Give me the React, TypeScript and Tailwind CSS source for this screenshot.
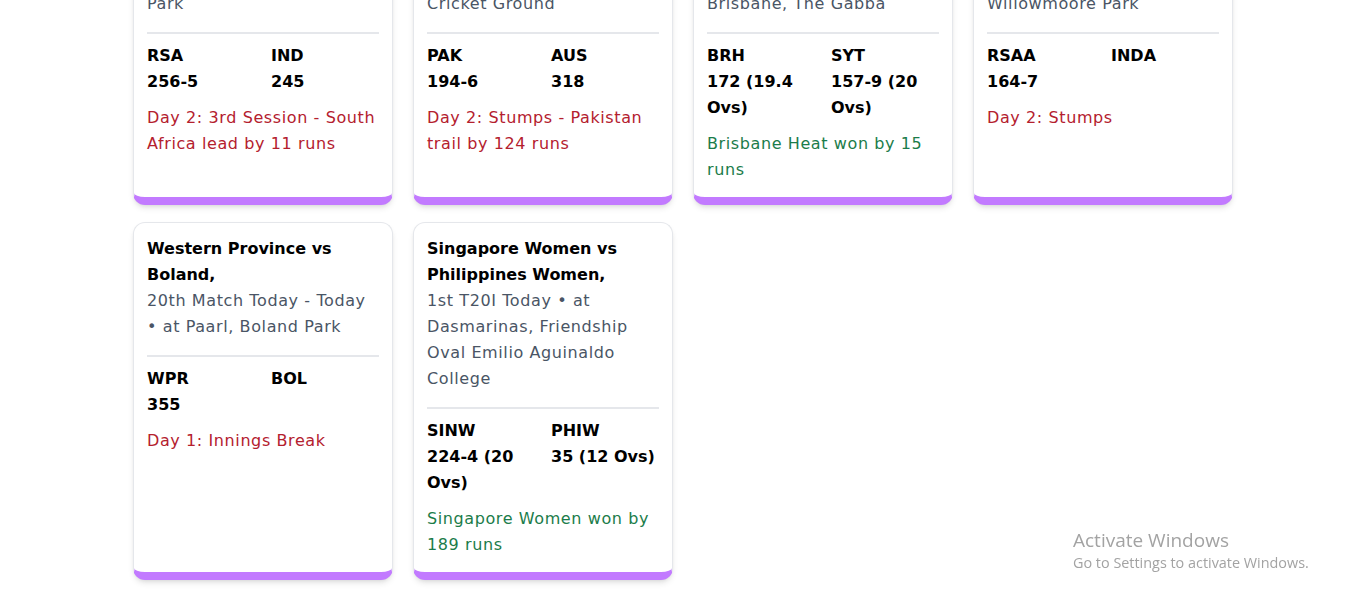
import React from "react";

type Match = {
  title: string;
  info: string;
  home: string;
  away: string;
  homeScore: string;
  awayScore: string;
  status: string;
  won?: boolean;
};

const matches: Match[] = [
  {
    title: "South Africa vs India,",
    info: "2nd Test Today - Today • at Centurion, SuperSport Park",
    home: "RSA",
    away: "IND",
    homeScore: "256-5",
    awayScore: "245",
    status: "Day 2: 3rd Session - South Africa lead by 11 runs",
  },
  {
    title: "Pakistan vs Australia,",
    info: "2nd Test Today • at Melbourne, Melbourne Cricket Ground",
    home: "PAK",
    away: "AUS",
    homeScore: "194-6",
    awayScore: "318",
    status: "Day 2: Stumps - Pakistan trail by 124 runs",
  },
  {
    title: "Brisbane Heat vs Sydney Thunder,",
    info: "11th Match Today • at Brisbane, The Gabba",
    home: "BRH",
    away: "SYT",
    homeScore: "172 (19.4 Ovs)",
    awayScore: "157-9 (20 Ovs)",
    status: "Brisbane Heat won by 15 runs",
    won: true,
  },
  {
    title: "SA A vs India A,",
    info: "Unofficial Test Today - Today • at Benoni, Willowmoore Park",
    home: "RSAA",
    away: "INDA",
    homeScore: "164-7",
    awayScore: "",
    status: "Day 2: Stumps",
  },
  {
    title: "Western Province vs Boland,",
    info: "20th Match Today - Today • at Paarl, Boland Park",
    home: "WPR",
    away: "BOL",
    homeScore: "355",
    awayScore: "",
    status: "Day 1: Innings Break",
  },
  {
    title: "Singapore Women vs Philippines Women,",
    info: "1st T20I Today • at Dasmarinas, Friendship Oval Emilio Aguinaldo College",
    home: "SINW",
    away: "PHIW",
    homeScore: "224-4 (20 Ovs)",
    awayScore: "35 (12 Ovs)",
    status: "Singapore Women won by 189 runs",
    won: true,
  },
];

const MatchCard: React.FC<{ match: Match }> = ({ match }) => {
  return (
    <article className="flex flex-col rounded-xl border border-gray-200 border-b-8 border-b-purple-400 bg-white px-[13px] pb-[14px] pt-[13px] shadow-md">
      <div className="border-b-2 border-gray-200 pb-[15px]">
        <h3 className="text-base font-bold leading-[26px] text-black">{match.title}</h3>
        <p className="text-base leading-[26px] tracking-[0.6px] text-gray-600">{match.info}</p>
      </div>
      <div className="mt-[9px] grid grid-cols-2 gap-4 text-base font-bold leading-[26px] text-black">
        <div>
          <p>{match.home}</p>
          <p>{match.homeScore}</p>
        </div>
        <div>
          <p>{match.away}</p>
          <p>{match.awayScore}</p>
        </div>
      </div>
      <p
        className={
          match.won
            ? "mt-2.5 text-base leading-[26px] tracking-[0.6px] text-[#1b7c4a]"
            : "mt-2.5 text-base leading-[26px] tracking-[0.6px] text-[#b4202e]"
        }
      >
        {match.status}
      </p>
    </article>
  );
};

export default function App() {
  return (
    <div className="min-h-screen overflow-hidden bg-white font-['DejaVu_Sans',sans-serif]">
      <div className="mx-auto mt-[-101px] grid w-[1100px] grid-cols-4 gap-x-5 gap-y-[17px]">
        {matches.map((m) => (
          <MatchCard key={m.home + m.away} match={m} />
        ))}
      </div>
      <div className="pointer-events-none fixed left-[1073px] top-[528px] font-['Open_Sans',sans-serif] text-[#a3a3a3]">
        <p className="text-[19px] leading-[24px]">Activate Windows</p>
        <p className="text-[14.4px] leading-[21px]">Go to Settings to activate Windows.</p>
      </div>
    </div>
  );
}
